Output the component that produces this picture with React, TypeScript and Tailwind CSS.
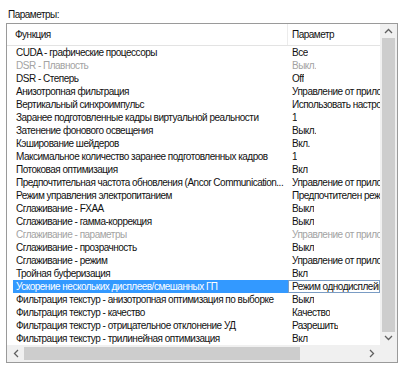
const rows: { name: string; value: string; off?: boolean; sel?: boolean }[] = [
  { name: "CUDA - графические процессоры", value: "Все" },
  { name: "DSR - Плавность", value: "Выкл.", off: true },
  { name: "DSR - Степерь", value: "Off" },
  { name: "Анизотропная фильтрация", value: "Управление от приложения" },
  { name: "Вертикальный синхроимпульс", value: "Использовать настройку" },
  { name: "Заранее подготовленные кадры виртуальной реальности", value: "1" },
  { name: "Затенение фонового освещения", value: "Выкл." },
  { name: "Кэширование шейдеров", value: "Вкл." },
  { name: "Максимальное количество заранее подготовленных кадров", value: "1" },
  { name: "Потоковая оптимизация", value: "Вкл" },
  { name: "Предпочтительная частота обновления (Ancor Communication...", value: "Управление от приложения" },
  { name: "Режим управления электропитанием", value: "Предпочтителен режим" },
  { name: "Сглаживание - FXAA", value: "Выкл" },
  { name: "Сглаживание - гамма-коррекция", value: "Выкл" },
  { name: "Сглаживание - параметры", value: "Управление от приложения", off: true },
  { name: "Сглаживание - прозрачность", value: "Выкл" },
  { name: "Сглаживание - режим", value: "Управление от приложения" },
  { name: "Тройная буферизация", value: "Вкл" },
  { name: "Ускорение нескольких дисплеев/смешанных ГП", value: "Режим однодисплейной", sel: true },
  { name: "Фильтрация текстур - анизотропная оптимизация по выборке", value: "Выкл" },
  { name: "Фильтрация текстур - качество", value: "Качество" },
  { name: "Фильтрация текстур - отрицательное отклонение УД", value: "Разрешить" },
  { name: "Фильтрация текстур - трилинейная оптимизация", value: "Вкл" },
]

const font = { fontFamily: '"Liberation Sans", Arial, sans-serif' }

export default function App() {
  return (
    <div className="w-[400px] h-[370px] bg-white text-[10px] tracking-[-0.5px] text-[#111] overflow-hidden" style={font}>
      <div className="h-[23px] pl-[8px] pt-[8px] leading-[13px]">Параметры:</div>
      <div className="ml-[6px] w-[392px] h-[340px] border border-[#9a9a9a] flex flex-col">
        <div className="flex flex-1 min-h-0">
          {/* table */}
          <div className="w-[373px] overflow-hidden">
            <div className="h-[22px] flex border-b border-[#e3e3e3] leading-[22px]">
              <div className="w-[281px] shrink-0 pl-[8px] border-r border-[#ececec]">Функция</div>
              <div className="pl-[4px] whitespace-nowrap">Параметр</div>
            </div>
            {rows.map((r, i) => (
              <div key={i} className={`h-[13px] flex leading-[13px] whitespace-nowrap ${r.off ? "text-[#a3a3a3]" : ""}`}>
                <div className="w-[281px] shrink-0 pl-[6px] overflow-hidden">
                  {r.sel ? (
                    <div className="bg-[#3399ff] text-white pl-[3px] h-[13px]">{r.name}</div>
                  ) : (
                    <div className="pl-[3px]">{r.name}</div>
                  )}
                </div>
                {r.sel ? (
                  <div className="flex-1 border border-[#7a9cc4] pl-[3px] leading-[11px] h-[13px] overflow-hidden">{r.value}</div>
                ) : (
                  <div className="pl-[4px] overflow-hidden">{r.value}</div>
                )}
              </div>
            ))}
          </div>
          {/* vertical scrollbar */}
          <div className="w-[17px] bg-[#f0f0f0] flex flex-col items-center">
            <div className="h-[17px] flex items-center justify-center">
              <svg width="9" height="6" viewBox="0 0 9 6">
                <path d="M1 5 L4.5 1.5 L8 5" fill="none" stroke="#606060" strokeWidth="1.3" />
              </svg>
            </div>
            <div className="flex-1 w-full px-[2px]">
              <div className="h-[294px] bg-[#cdcdcd]" />
            </div>
            <div className="h-[17px] flex items-center justify-center">
              <svg width="9" height="6" viewBox="0 0 9 6">
                <path d="M1 1 L4.5 4.5 L8 1" fill="none" stroke="#606060" strokeWidth="1.3" />
              </svg>
            </div>
          </div>
        </div>
        {/* horizontal scrollbar */}
        <div className="h-[17px] flex">
          <div className="w-[373px] bg-[#f0f0f0] flex items-center">
            <div className="w-[17px] h-[17px] flex items-center justify-center">
              <svg width="6" height="9" viewBox="0 0 6 9">
                <path d="M5 1 L1.5 4.5 L5 8" fill="none" stroke="#606060" strokeWidth="1.3" />
              </svg>
            </div>
            <div className="flex-1 py-[2px] h-full">
              <div className="w-[276px] h-full bg-[#cdcdcd]" />
            </div>
            <div className="w-[17px] h-[17px] flex items-center justify-center">
              <svg width="6" height="9" viewBox="0 0 6 9">
                <path d="M1 1 L4.5 4.5 L1 8" fill="none" stroke="#606060" strokeWidth="1.3" />
              </svg>
            </div>
          </div>
          <div className="flex-1 bg-[#f0f0f0]" />
        </div>
      </div>
    </div>
  )
}
